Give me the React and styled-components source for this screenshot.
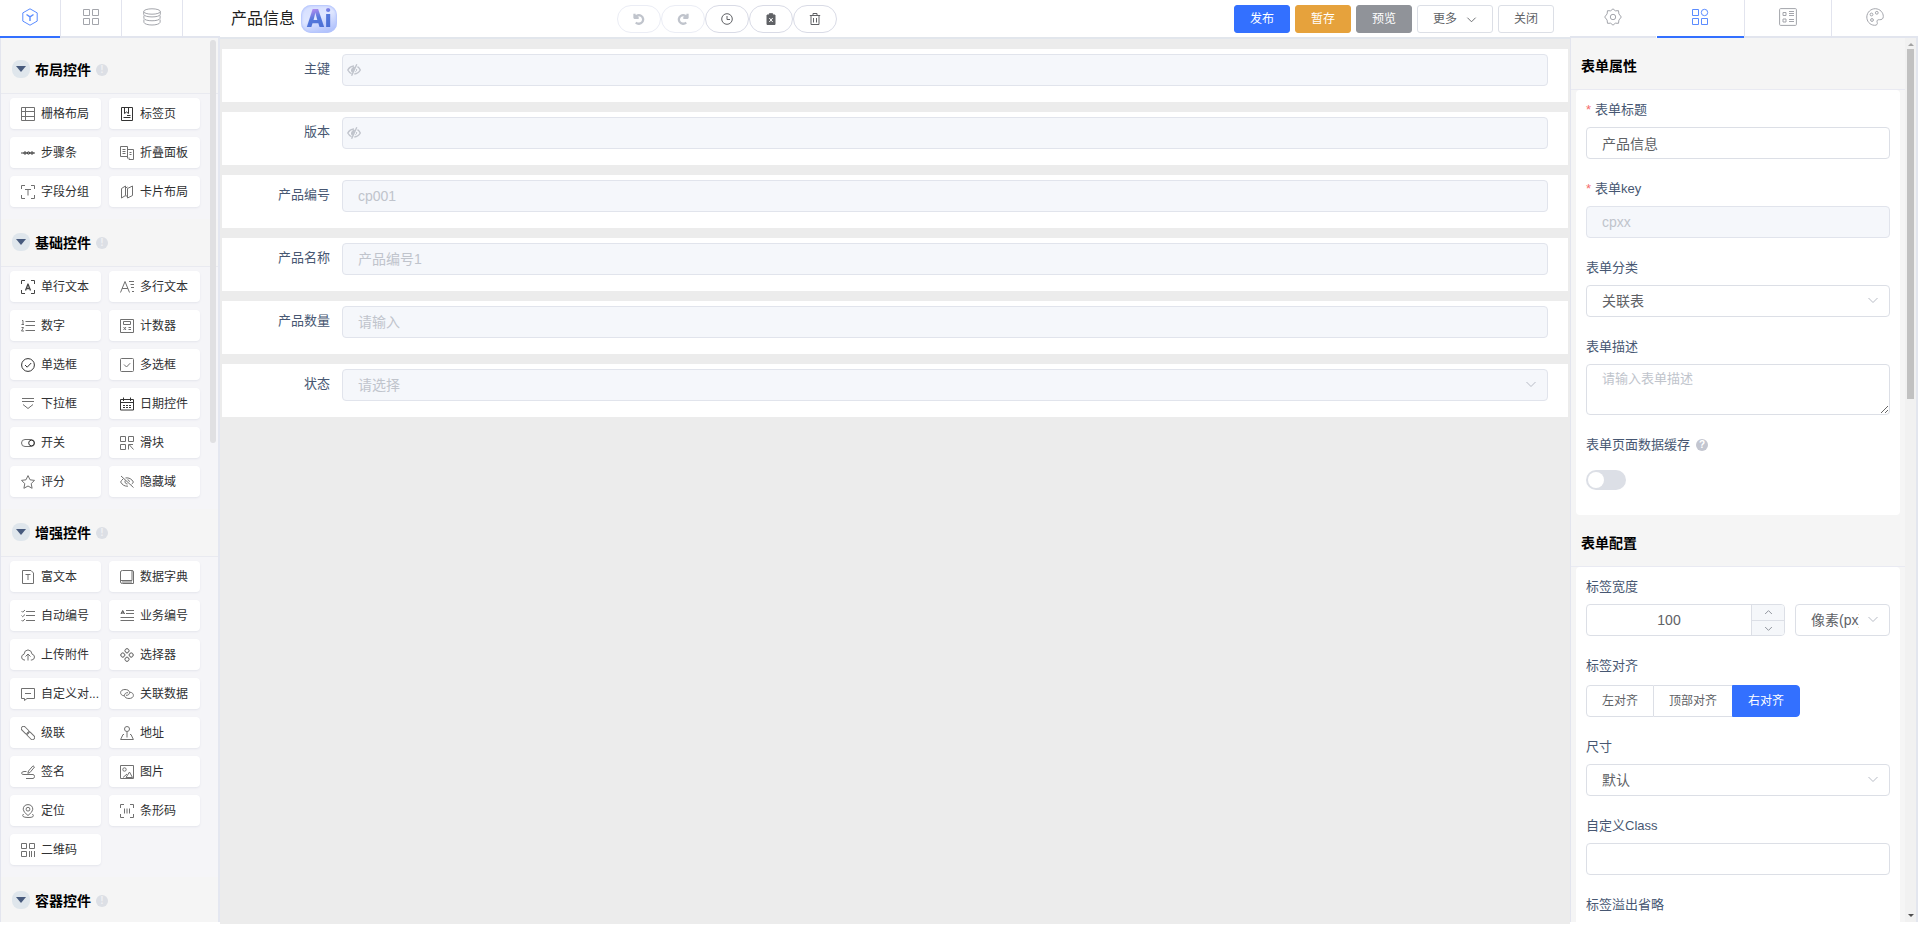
import React, { useState } from "react";
import styled, { createGlobalStyle, css } from "styled-components";

const GlobalStyle = createGlobalStyle`
  *, *::before, *::after { box-sizing: border-box; }
  body {
    margin: 0;
    background: #fff;
    font-family: "Liberation Sans", "Noto Sans CJK SC", sans-serif;
    font-size: 14px;
    line-height: 20px;
    color: #303133;
  }
  button, input, select, textarea { font: inherit; margin: 0; }
`;

/* ---------- page frame ---------- */

const Page = styled.div`
  display: grid;
  grid-template-columns: 220px minmax(0, 1fr) 349px;
  height: 100vh;
  overflow: hidden;
`;

const SidePanel = styled.aside`
  display: flex;
  flex-direction: column;
  min-height: 0;
  margin-bottom: 5px;
`;

const Center = styled.main`
  display: flex;
  flex-direction: column;
  min-width: 0;
  min-height: 0;
  margin-bottom: 3px;
  background: #ececec;
`;

const TabBar = styled.nav`
  display: flex;
  flex: none;
  height: 38px;
  background: #fff;
`;

const Tab = styled.button`
  display: flex;
  align-items: center;
  justify-content: center;
  flex: ${(p) => (p.$fixed ? "0 0 61px" : "1 1 0")};
  padding: 0 0 4px;
  border: 0;
  border-right: 1px solid ${(p) => (p.$divider ? "#e2e4ee" : "transparent")};
  box-shadow: inset 0 -2px 0 ${(p) => (p.$active ? "#3370ff" : "#e2e5ee")};
  background: #fff;
  color: ${(p) => (p.$active ? "#5b8cff" : "#a3a5ab")};
  cursor: pointer;
`;

const TabFiller = styled.div`
  flex: 1;
  box-shadow: inset 0 -2px 0 #e2e5ee;
`;

/* ---------- icons ---------- */

const Svg = styled.svg`
  display: block;
  flex: none;
  fill: none;
  stroke: currentColor;
  stroke-width: ${(p) => p.$weight || 1};
  stroke-linejoin: round;
`;

const Icon = ({ name, size = 14, box = 14, weight }) => (
  <Svg width={size} height={size} viewBox={`0 0 ${box} ${box}`} $weight={weight} aria-hidden="true">
    {paths[name]}
  </Svg>
);

const corners = <path d="M.5 4V.5H4M10 .5h3.500V4M13.500 10v3.500H10M4 13.500H.5V10" />;

const paths = {
  grid: <path d="M.5.5h13v13H.5zM4.500.5v13M.5 4.500h13M.5 9.500h13" />,
  tabs: (
    <g stroke="#333">
      <path d="M1.500.5h11v13h-11zM3.500 10.500h7M7 8.500h3.500" />
      <path d="M4.500.5v6l2-1.500 2 1.500v-6" />
    </g>
  ),
  steps: (
    <g stroke="#444">
      <path d="M0 7h14" />
      <circle cx="4" cy="7" r="1.200" />
      <circle cx="7.500" cy="7" r="1.200" />
      <circle cx="11" cy="7" r="1.200" />
    </g>
  ),
  collapse: (
    <path d="M7.500 10.500H.5V.5h7v12M2.500 3.500h3M2.500 5.500h3M2.500 7.500h3M7.500 3.500h6v10h-4.500M9.500 6.500h2M9.500 8.500h2M9 11.500v2" />
  ),
  group: (
    <>
      {corners}
      <path d="M4 4.500h6M7 4.500v6" />
    </>
  ),
  cardLayout: <path d="M1.500 3.500l4-2.500v9.500l-4 2.500zM5.500 3l2-1M7.500 3.500l5-2.500v9.500l-5 2.500zM5.500 11h2" />,
  input: (
    <g stroke="#444">
      {corners}
      <path d="M4.500 10.500L7 4l2.500 6.500M5.500 8.500h3" strokeWidth="1.300" />
    </g>
  ),
  textarea: <path d="M.5 12.500L5 1.500l4.500 11M2 8.500h6M9 1.500h5M10.500 4.500H14M11 7.500h3M12 11.500h2" />,
  number: <path d="M4.500 2.500H14M4.500 6.500H14M4.500 11.500H14M1 1.500h1V5.500M.5 5.500h2.500M.5 8.500h2l-2 3.500h2.500" />,
  counter: <path d="M.5.5h13v13H.5zM3.500 2.500h7v3h-7zM3.500 8l2.500 3M6 8l-2.500 3M8.500 8.500H11M8.500 10.500H11" />,
  radio: (
    <g stroke="#333">
      <circle cx="7" cy="7" r="6.400" />
      <path d="M4 7l2.200 2.200L10.200 5" />
    </g>
  ),
  checkbox: (
    <>
      <rect x=".5" y=".5" width="13" height="13" rx="1" />
      <path d="M4 6.500l2.500 2.500L10.200 5.200" />
    </>
  ),
  select: <path d="M1 1.500h12M1 4.500h12M2 7.500l5 4 5-4" />,
  date: (
    <g stroke="#333">
      <path d="M.5 2.500h13v10.500H.5zM.5 5.500h13M3.500.5v3.500M10.500.5v3.500" />
      <path d="M3 8.500h2M6 8.500h2M9 8.500h2M3 10.500h2M6 10.500h2M9 10.500h2" />
    </g>
  ),
  switch: (
    <>
      <rect x=".5" y="3.500" width="13" height="7" rx="3.500" />
      <circle cx="10.500" cy="7" r="2.800" stroke="#333" />
    </>
  ),
  slider: <path d="M.5.5h5v5h-5zM8.500.5h5v5h-5zM.5 8.500h5v5h-5zM8.500 13.500v-5h4.500M9.500 9l4 4.500" />,
  rate: <path d="M7 .6l2 4.200 4.500.6-3.300 3.200.9 4.700L7 11l-4.100 2.300.9-4.700L.5 5.400 5 4.800z" />,
  hidden: (
    <>
      <path d="M1 1l12.500 11.500M3 4Q1.500 5.300.6 7q2.500 4.500 7.400 4.200M5.500 2.900Q10.800 2.300 13.400 7q-.7 1.400-1.800 2.300" />
      <path d="M5.200 5.500q-1 3 2.300 3.500M7.500 4.700q1.800.3 2 2.100" />
    </>
  ),
  rich: <path d="M1.500.5h8.500l2.500 2.500v10.500h-11zM4.500 4.500h5M7 4.500v5.500" />,
  dict: (
    <>
      <path d="M2.500.5h9.500q1.500 0 1.500 1.500v11.500h-11Q.5 13.500.5 12V2Q.5.500 2.500.5zM1 10.500h11v-10" />
      <path d="M2 12h10" />
    </>
  ),
  autoNo: <path d="M5 2.500h9M5 6.500h9M5 11.500h9M.5 2l1.200 1.200L4 1M.5 6.500l1.200 1.200L4 5.500M.5 11l1.200 1.200L4 10" />,
  bizNo: (
    <>
      <path d="M6 1.500h8M6 4.500h8M.5 8.500H14M.5 11.500H14" />
      <path d="M1 5l1.700-3.500L4.500 5M1.800 4h2" stroke="#444" />
    </>
  ),
  upload: (
    <path d="M4 12H3Q.6 11.500.6 9 .7 6.700 3 6.300 3.300 2.200 7 1.900q3.600.3 4.100 4.300 2.300.5 2.400 2.800-.1 2.600-2.600 3H9.800M7 12.500V6M4.500 8.500L7 6l2.500 2.500" />
  ),
  picker: (
    <>
      <rect x="5.200" y=".9" width="3.600" height="3.600" rx="1" transform="rotate(45 7 2.700)" />
      <rect x="1" y="5.200" width="3.600" height="3.600" rx="1" transform="rotate(45 2.800 7)" />
      <rect x="9.400" y="5.200" width="3.600" height="3.600" rx="1" transform="rotate(45 11.200 7)" />
      <rect x="5.200" y="9.500" width="3.600" height="3.600" rx="1" transform="rotate(45 7 11.300)" />
    </>
  ),
  dialog: <path d="M.5 1.500h13v10H6l-2.500 2v-2h-3zM4 6.500h6" />,
  relation: (
    <path d="M4 8.800C1.500 8.500.6 7 .6 5.600.7 3.500 2.600 2.500 5 2.500S9.500 3.500 9.500 5.500 8 8.500 6 8.300M10 5.200c2.500.3 3.400 1.800 3.400 3.200-.1 2.100-2 3.100-4.400 3.100S4.500 10.500 4.500 8.500 6 5.500 8 5.700" />
  ),
  cascade: (
    <>
      <rect x="-.300" y="2" width="9" height="4.400" rx="2.200" transform="rotate(45 4.200 4.200)" />
      <rect x="5.300" y="7.600" width="9" height="4.400" rx="2.200" transform="rotate(45 9.800 9.800)" />
    </>
  ),
  address: (
    <>
      <circle cx="7" cy="3" r="2.500" />
      <path d="M7 5.500v6M4 8.500H3L.6 13.500h12.800L11 8.500h-1" />
    </>
  ),
  sign: (
    <path d="M7.500 6L12 .8l1.500 1.200L9 7.500l-2.200.8zM5.500 6.500H3Q.6 6.700.6 8.200T3 9.500h9q1.500.2 1.500 2T12 13.500H5" />
  ),
  image: (
    <>
      <path d="M.5.500h13v13H.5zM3 12.500l4-3.500M6 12.500L9.500 7l3 5.500z" />
      <circle cx="4.500" cy="4.500" r="1.700" />
    </>
  ),
  locate: (
    <>
      <path d="M7 11.500Q2.200 8 2.200 5.200 2.500.8 7 .6q4.500.2 4.800 4.600Q11.800 8 7 11.500z" />
      <circle cx="7" cy="5.200" r="1.900" />
      <path d="M2.500 10Q-.5 13.300 7 13.500T11.500 10" />
    </>
  ),
  barcode: (
    <>
      {corners}
      <path d="M4.500 4.500v5M7 4.500v5M9.500 4.500v5" />
    </>
  ),
  qrcode: <path d="M.5.5h5v5h-5zM8.500.5h5v5h-5zM.5 8.500h5v5h-5zM8.500 8v6M10.500 8v6M13.500 8v6" />,

  cube: (
    <>
      <path d="M9 .8l7.200 4.100v8.200L9 17.200l-7.200-4.100V4.900z" />
      <path d="M5.500 6.500L9 8.800l3.500-2.300M9 8.800v4.200" strokeWidth="1.400" />
    </>
  ),
  apps: <path d="M1.500 1.500h6v6h-6zM10.500 1.500h6v6h-6zM1.500 10.500h6v6h-6zM10.500 10.500h6v6h-6z" />,
  appsRound: (
    <>
      <path d="M1.500 1.500h6v6h-6zM1.500 10.500h6v6h-6zM10.500 10.500h6v6h-6z" />
      <circle cx="13.500" cy="4.500" r="3.200" />
    </>
  ),
  data: (
    <>
      <ellipse cx="9" cy="3.500" rx="8.300" ry="2.700" />
      <path d="M.7 3.500v2.800C1 9.800 17 9.800 17.300 6.300V3.500M.9 7.500v2.800c.8 3.300 15.400 3.300 16.200 0V7.500M.9 11.500v2.800c.8 3.600 15.400 3.600 16.200 0v-2.800" />
    </>
  ),
  gear: (
    <>
      <path d="M9 .8l2.300 2 3.200-.1.400 3.200L17.300 9l-2.400 3.100-.4 3.200-3.200-.1L9 17.200l-2.300-2-3.200.1-.4-3.200L.7 9l2.400-3.100.4-3.200 3.200.1z" />
      <circle cx="9" cy="9" r="2.700" />
    </>
  ),
  listDoc: (
    <>
      <rect x=".6" y=".6" width="16.800" height="16.800" rx="1" />
      <path d="M4 4.500h3v3H4zM4 11h3v3H4zM10 3.500h5M10 5.500h5M10 7.500h5M10 11.500h5M10 13.500h5" />
    </>
  ),
  palette: (
    <>
      <path d="M8.500 17.300C3.500 17 .8 13 .8 9 1 4 5 .7 9.300.7c5 .2 8 4 8 7.800 0 2.600-1.800 3.300-3.800 3.200-2-.2-3 .8-2.300 2.700.6 1.700-.4 3-2.700 2.900z" />
      <circle cx="5.500" cy="6.500" r="1.400" />
      <circle cx="10.800" cy="4.800" r="1.400" />
      <circle cx="6" cy="12" r="1.400" />
    </>
  ),

  undo: <path d="M1.500.8v4h4.200M2 4.500A4.300 4.300 0 1 1 2.800 9.500" strokeWidth="2.300" />,
  redo: <path d="M10.500.8v4H6.300M10 4.500A4.300 4.300 0 1 0 9.200 9.500" strokeWidth="2.300" />,
  clock: (
    <>
      <circle cx="6" cy="6" r="5.300" />
      <path d="M6 3v3.500h3" />
    </>
  ),
  clipboard: (
    <>
      <path d="M2 2h8v9.500H2zM4.300 2V.7h3.400V2" fill="currentColor" />
      <path d="M4.300 5l3.400 4M7.700 5L4.300 9" stroke="#fff" />
    </>
  ),
  trash: <path d="M.8 2.500h10.400M4 2.500v-2h4v2M2 3v8.500h8V3M4.500 5v4.500M7.500 5v4.500" />,
  chevron: <path d="M1.500 4l4.500 4.500L10.500 4" />,
  eyeOff: (
    <>
      <path
        d="M7 3C4 3.200 2 4.800.8 7c1 1.800 2.200 3 3.700 3.600M10.500 3.600c1.200.8 2.200 1.900 2.800 3.400-1.200 2.200-3.300 3.700-6 4M9.800 1.200L4.600 12.800"
        strokeWidth="1.400"
      />
      <path d="M7.500 4.200Q4 4.500 4.600 8.500l1 .6z" fill="currentColor" />
      <path d="M9.700 6q.3 2-1.500 3" />
    </>
  ),
};

/* ---------- left panel: widget library ---------- */

const LibraryBody = styled.div`
  position: relative;
  flex: 1;
  min-height: 0;
  overflow: hidden;
  padding-top: 8px;
  border-left: 1px solid #e3e5ee;
  border-right: 2px solid #e4e7f0;
  background: #f5f5f5;
`;

const LibraryThumb = styled.div`
  position: absolute;
  top: 2px;
  right: 2px;
  width: 6px;
  height: 403px;
  border-radius: 3px;
  background: #e0e0e2;
`;

const GroupHead = styled.div`
  display: flex;
  align-items: center;
  height: 48px;
  padding-left: 11px;
  border-bottom: 1px solid #e9eaf0;
`;

const FoldButton = styled.button`
  display: flex;
  align-items: center;
  justify-content: center;
  width: 18px;
  height: 18px;
  margin: 0 5px 2px 0;
  padding: 0;
  border: 0;
  border-radius: 8px;
  background: #dfe6ec;
  cursor: pointer;

  &::before {
    content: "";
    border: 5px solid transparent;
    border-top: 6px solid #475a7d;
    border-bottom: 0;
  }
`;

const GroupTitle = styled.h2`
  margin: 0;
  font-size: 14px;
  line-height: 20px;
  font-weight: 700;
  color: #000;
`;

const Hint = styled.span`
  display: inline-flex;
  align-items: center;
  justify-content: center;
  width: 12px;
  height: 12px;
  margin-left: ${(p) => (p.$dark ? 6 : 5)}px;
  border-radius: 50%;
  background: ${(p) => (p.$dark ? "#c3c6d0" : "#dcdfe5")};
  color: ${(p) => (p.$dark ? "#fff" : "#f0f1f4")};
  font-size: 10px;
  line-height: 12px;
  font-weight: 700;
`;

const WidgetGrid = styled.div`
  display: grid;
  grid-template-columns: 1fr 1fr;
  gap: 8px;
  padding: 4px 18px 12px 9px;
  background: #f5f5f8;
`;

const WidgetCard = styled.button`
  display: flex;
  align-items: center;
  gap: 6px;
  min-width: 0;
  height: 31px;
  padding: 0 0 0 11px;
  border: 0;
  border-radius: 4px;
  background: #fff;
  box-shadow: 0 1px 2px #e4e5ec;
  color: #707070;
  cursor: grab;
`;

const WidgetName = styled.span`
  font-size: 12px;
  line-height: 18px;
  color: #303133;
  white-space: nowrap;
`;

const library = [
  {
    title: "布局控件",
    items: [
      ["grid", "栅格布局"],
      ["tabs", "标签页"],
      ["steps", "步骤条"],
      ["collapse", "折叠面板"],
      ["group", "字段分组"],
      ["cardLayout", "卡片布局"],
    ],
  },
  {
    title: "基础控件",
    items: [
      ["input", "单行文本"],
      ["textarea", "多行文本"],
      ["number", "数字"],
      ["counter", "计数器"],
      ["radio", "单选框"],
      ["checkbox", "多选框"],
      ["select", "下拉框"],
      ["date", "日期控件"],
      ["switch", "开关"],
      ["slider", "滑块"],
      ["rate", "评分"],
      ["hidden", "隐藏域"],
    ],
  },
  {
    title: "增强控件",
    items: [
      ["rich", "富文本"],
      ["dict", "数据字典"],
      ["autoNo", "自动编号"],
      ["bizNo", "业务编号"],
      ["upload", "上传附件"],
      ["picker", "选择器"],
      ["dialog", "自定义对..."],
      ["relation", "关联数据"],
      ["cascade", "级联"],
      ["address", "地址"],
      ["sign", "签名"],
      ["image", "图片"],
      ["locate", "定位"],
      ["barcode", "条形码"],
      ["qrcode", "二维码"],
    ],
  },
  { title: "容器控件", items: [] },
];

const WidgetLibrary = () => (
  <SidePanel>
    <TabBar>
      <Tab $fixed $active $divider aria-label="控件">
        <Icon name="cube" size={18} box={18} />
      </Tab>
      <Tab $fixed $divider aria-label="模板">
        <Icon name="apps" size={18} box={18} />
      </Tab>
      <Tab $fixed $divider aria-label="数据">
        <Icon name="data" size={18} box={18} />
      </Tab>
      <TabFiller />
    </TabBar>
    <LibraryBody>
      {library.map((group) => (
        <section key={group.title}>
          <GroupHead>
            <FoldButton aria-label={group.title} />
            <GroupTitle>{group.title}</GroupTitle>
            <Hint>!</Hint>
          </GroupHead>
          <WidgetGrid>
            {group.items.map(([icon, name]) => (
              <WidgetCard key={name}>
                <Icon name={icon} />
                <WidgetName>{name}</WidgetName>
              </WidgetCard>
            ))}
          </WidgetGrid>
        </section>
      ))}
      <LibraryThumb />
    </LibraryBody>
  </SidePanel>
);

/* ---------- centre: toolbar and form canvas ---------- */

const Toolbar = styled.header`
  display: grid;
  grid-template-columns: 7fr 17fr;
  flex: none;
  padding: 5px 16px 4px 11px;
  border-bottom: 2px solid #e2e6ec;
  background: #fff;
`;

const TitleBox = styled.div`
  display: flex;
  align-items: center;
  gap: 6px;
`;

const FormTitle = styled.h1`
  margin: 0;
  font-size: 16px;
  line-height: 24px;
  font-weight: 400;
  color: #1f1f1f;
`;

const AiBadge = styled.button`
  width: 36px;
  height: 28px;
  padding: 0;
  border: 0;
  border-radius: 10px;
  background: linear-gradient(160deg, #d3ddff, #dfe6ff 45%, #a4b8fb);
  box-shadow: inset 0 0 2px 1px #b4c4fd;
  cursor: pointer;
`;

const AiText = styled.span`
  display: block;
  font-family: Inter, "Liberation Sans", sans-serif;
  font-size: 24px;
  line-height: 28px;
  font-weight: 800;
  background: linear-gradient(160deg, #b48cf0 20%, #5478dc 45%, #4468cf);
  background-clip: text;
  color: transparent;
`;

const ToolbarMain = styled.div`
  display: flex;
  align-items: center;
  justify-content: space-between;
`;

const ButtonRow = styled.div`
  display: flex;
  gap: ${(p) => p.$gap || 0}px;
`;

const PillButton = styled.button`
  display: flex;
  align-items: center;
  justify-content: center;
  width: 44px;
  height: 28px;
  padding: 0 0 1px;
  border: 1px solid #d9dbe6;
  border-radius: 14px;
  background: #fff;
  color: #606266;
  cursor: pointer;

  &:disabled {
    border-color: #ebedf5;
    color: #c0c4cc;
  }
`;

const tones = {
  primary: css`
    border-color: #3370ff;
    background: #3370ff;
    color: #fff;
  `,
  warning: css`
    border-color: #e6a23c;
    background: #e6a23c;
    color: #fff;
  `,
  info: css`
    border-color: #909399;
    background: #909399;
    color: #fff;
  `,
};

const ActionButton = styled.button`
  display: flex;
  align-items: center;
  gap: 9px;
  height: 28px;
  padding: 0 15px;
  border: 1px solid #dcdfe6;
  border-radius: 3px;
  background: #fff;
  color: #606266;
  font-size: 12px;
  line-height: 18px;
  white-space: nowrap;
  cursor: pointer;
  ${(p) => tones[p.$tone]}
`;

const Canvas = styled.form`
  display: flex;
  flex-direction: column;
  gap: 10px;
  padding: 10px 2px;
`;

const FieldRow = styled.div`
  display: grid;
  grid-template-columns: 120px minmax(0, 1fr);
  padding: 5px 20px 16px 0;
  background: #fff;
`;

const FieldLabel = styled.label`
  padding-right: 12px;
  font-size: 13px;
  line-height: 30px;
  color: #475772;
  text-align: right;
`;

const ControlWrap = styled.div`
  position: relative;
  min-width: 0;
`;

const controlStyle = css`
  display: block;
  width: 100%;
  height: 32px;
  padding: 0 15px;
  border: 1px solid #dcdfe6;
  border-radius: 4px;
  outline: 0;
  background: #fff;
  color: #606266;
  font-size: 14px;
  line-height: 20px;

  &::placeholder {
    color: #c0c4cc;
    opacity: 1;
  }
  &:disabled {
    border-color: #e1e4ec;
    background: #f5f7fb;
    color: #c0c4cc;
    opacity: 1;
  }
`;

const TextInput = styled.input`
  ${controlStyle}
`;

const SelectInput = styled.select`
  ${controlStyle}
  padding-right: 30px;
  appearance: none;
`;

const SelectArrow = styled.span`
  position: absolute;
  top: 9px;
  right: 11px;
  color: #b8bcc6;
  pointer-events: none;
`;

const PrefixIcon = styled.span`
  position: absolute;
  top: 9px;
  left: 5px;
  color: #c0c4cc;
`;

const Select = ({ id, options, ...rest }) => (
  <ControlWrap>
    <SelectInput id={id} {...rest}>
      {options.map((o) => (
        <option key={o}>{o}</option>
      ))}
    </SelectInput>
    <SelectArrow>
      <Icon name="chevron" size={12} box={12} />
    </SelectArrow>
  </ControlWrap>
);

const canvasFields = [
  { id: "pk", label: "主键", hidden: true },
  { id: "version", label: "版本", hidden: true },
  { id: "code", label: "产品编号", hint: "cp001" },
  { id: "name", label: "产品名称", hint: "产品编号1" },
  { id: "count", label: "产品数量", hint: "请输入" },
  { id: "state", label: "状态", hint: "请选择", select: true },
];

const Designer = () => (
  <Center>
    <Toolbar>
      <TitleBox>
        <FormTitle>产品信息</FormTitle>
        <AiBadge>
          <AiText>Ai</AiText>
        </AiBadge>
      </TitleBox>
      <ToolbarMain>
        <ButtonRow>
          <PillButton disabled aria-label="撤销">
            <Icon name="undo" size={12} box={12} />
          </PillButton>
          <PillButton disabled aria-label="重做">
            <Icon name="redo" size={12} box={12} />
          </PillButton>
          <PillButton aria-label="历史">
            <Icon name="clock" size={12} box={12} />
          </PillButton>
          <PillButton aria-label="清空剪贴板">
            <Icon name="clipboard" size={12} box={12} />
          </PillButton>
          <PillButton aria-label="删除">
            <Icon name="trash" size={12} box={12} />
          </PillButton>
        </ButtonRow>
        <ButtonRow $gap={5}>
          <ActionButton $tone="primary">发布</ActionButton>
          <ActionButton $tone="warning">暂存</ActionButton>
          <ActionButton $tone="info">预览</ActionButton>
          <ActionButton>
            更多
            <Icon name="chevron" size={11} box={12} />
          </ActionButton>
          <ActionButton>关闭</ActionButton>
        </ButtonRow>
      </ToolbarMain>
    </Toolbar>
    <Canvas>
      {canvasFields.map((f) => (
        <FieldRow key={f.id}>
          <FieldLabel htmlFor={f.id}>{f.label}</FieldLabel>
          {f.select ? (
            <Select id={f.id} options={[f.hint]} disabled />
          ) : (
            <ControlWrap>
              <TextInput id={f.id} placeholder={f.hint} disabled />
              {f.hidden && (
                <PrefixIcon>
                  <Icon name="eyeOff" />
                </PrefixIcon>
              )}
            </ControlWrap>
          )}
        </FieldRow>
      ))}
    </Canvas>
  </Center>
);

/* ---------- right panel: form properties ---------- */

const PropsBody = styled.div`
  display: flex;
  flex: 1;
  min-height: 0;
  margin-right: 1px;
  border-left: 1px solid #e3e5ee;
  border-right: 2px solid #e3e6ee;
  background: #f5f5f5;
`;

const PropsScroll = styled.div`
  flex: 1;
  min-width: 0;
  overflow: hidden;
`;

const Track = styled.div`
  display: flex;
  flex-direction: column;
  align-items: center;
  flex: none;
  width: 11px;
  padding: 5px 0;
  background: #f1f1f1;
`;

const TrackArrow = styled.span`
  flex: none;
  margin: ${(p) => (p.$down ? "auto 0 0" : "0 0 3px")};
  border: 3px solid transparent;
  ${(p) =>
    p.$down
      ? "border-top-color: #505050; border-bottom: 0;"
      : "border-bottom-color: #a3a3a3; border-top: 0;"}
`;

const TrackThumb = styled.div`
  flex: none;
  width: 7px;
  height: 40%;
  background: #c1c1c1;
`;

const PropsHead = styled.div`
  display: flex;
  align-items: center;
  height: 52px;
  padding: 4px 0 0 10px;
  border-bottom: 1px solid #e9eaf2;
`;

const PropsCard = styled.div`
  margin: 0 5px;
  padding: 4px 10px 3px;
  border-radius: 4px;
  background: #fff;
`;

const PropItem = styled.div`
  margin-bottom: 14px;
`;

const PropLabel = styled.label`
  display: flex;
  align-items: center;
  height: 33px;
  padding-bottom: 2px;
  font-size: 13px;
  line-height: 20px;
  color: #475772;
`;

const Star = styled.span`
  margin-right: 4px;
  color: #f56c6c;
`;

const TextArea = styled.textarea`
  ${controlStyle}
  height: 51px;
  padding: 4px 15px;
  font-size: 13px;
  resize: vertical;
`;

const SwitchBox = styled.div`
  display: flex;
  align-items: center;
  height: 36px;
`;

const SwitchInput = styled.input`
  position: relative;
  width: 40px;
  height: 20px;
  border-radius: 10px;
  background: #dcdfe6;
  appearance: none;
  cursor: pointer;

  &::before {
    content: "";
    position: absolute;
    top: 2px;
    left: 2px;
    width: 16px;
    height: 16px;
    border-radius: 50%;
    background: #fff;
  }
  &:checked {
    background: #3370ff;
  }
  &:checked::before {
    left: 22px;
  }
`;

const SizeRow = styled.div`
  display: grid;
  grid-template-columns: minmax(0, 1fr) 95px;
  gap: 10px;
`;

const Stepper = styled.div`
  display: grid;
  grid-template-columns: minmax(0, 1fr) 33px;
  height: 32px;
  overflow: hidden;
  border: 1px solid #dcdfe6;
  border-radius: 4px;
  background: #fff;
`;

const StepperInput = styled.input`
  min-width: 0;
  padding: 0 15px;
  border: 0;
  outline: 0;
  background: transparent;
  color: #606266;
  text-align: center;
`;

const StepperButtons = styled.div`
  display: grid;
  grid-template-rows: 1fr 1fr;
  border-left: 1px solid #dcdfe6;
`;

const StepButton = styled.button`
  display: flex;
  align-items: center;
  justify-content: center;
  padding: 0;
  border: 0;
  background: #f5f7fa;
  color: #8f939b;
  cursor: pointer;

  & + & {
    border-top: 1px solid #dcdfe6;
  }
  &:first-child svg {
    transform: rotate(180deg);
  }
`;

const Segments = styled.div`
  display: flex;
  padding-top: 2px;
`;

const Segment = styled.label`
  position: relative;
  height: 32px;
  padding: 0 15px;
  border: 1px solid ${(p) => (p.$on ? "#3370ff" : "#dcdfe6")};
  border-right-width: ${(p) => (p.$beforeOn ? 0 : 1)}px;
  border-left-width: ${(p) => (p.$on || p.$first ? 1 : 0)}px;
  border-radius: ${(p) => (p.$first ? "4px 0 0 4px" : p.$last ? "0 4px 4px 0" : "0")};
  background: ${(p) => (p.$on ? "#3370ff" : "#fff")};
  color: ${(p) => (p.$on ? "#fff" : "#606266")};
  font-size: 12px;
  line-height: 30px;
  cursor: pointer;
`;

const SegmentRadio = styled.input`
  position: absolute;
  inset: 0;
  opacity: 0;
  cursor: pointer;
`;

const aligns = ["左对齐", "顶部对齐", "右对齐"];

const AlignPicker = () => {
  const [value, setValue] = useState(2);
  return (
    <Segments role="radiogroup" aria-label="标签对齐">
      {aligns.map((name, i) => (
        <Segment
          key={name}
          $on={i === value}
          $beforeOn={i + 1 === value}
          $first={i === 0}
          $last={i === aligns.length - 1}
        >
          <SegmentRadio type="radio" name="align" checked={i === value} onChange={() => setValue(i)} />
          {name}
        </Segment>
      ))}
    </Segments>
  );
};

const Prop = ({ label, id, required, help, children }) => (
  <PropItem>
    <PropLabel as={id ? "label" : "div"} htmlFor={id}>
      {required && <Star>*</Star>}
      {label}
      {help && <Hint $dark>?</Hint>}
    </PropLabel>
    {children}
  </PropItem>
);

const FormProps = () => (
  <SidePanel>
    <TabBar>
      <Tab aria-label="设置">
        <Icon name="gear" size={18} box={18} />
      </Tab>
      <Tab $active $divider aria-label="表单属性">
        <Icon name="appsRound" size={18} box={18} />
      </Tab>
      <Tab $divider aria-label="列表">
        <Icon name="listDoc" size={18} box={18} />
      </Tab>
      <Tab aria-label="主题">
        <Icon name="palette" size={18} box={18} />
      </Tab>
    </TabBar>
    <PropsBody>
      <PropsScroll>
        <PropsHead>
          <GroupTitle>表单属性</GroupTitle>
        </PropsHead>
        <PropsCard>
          <Prop id="f-title" label="表单标题" required>
            <TextInput id="f-title" defaultValue="产品信息" />
          </Prop>
          <Prop id="f-key" label="表单key" required>
            <TextInput id="f-key" defaultValue="cpxx" disabled />
          </Prop>
          <Prop id="f-type" label="表单分类">
            <Select id="f-type" options={["关联表"]} />
          </Prop>
          <Prop id="f-desc" label="表单描述">
            <TextArea id="f-desc" placeholder="请输入表单描述" />
          </Prop>
          <Prop id="f-cache" label="表单页面数据缓存" help>
            <SwitchBox>
              <SwitchInput id="f-cache" type="checkbox" role="switch" />
            </SwitchBox>
          </Prop>
        </PropsCard>
        <PropsHead>
          <GroupTitle>表单配置</GroupTitle>
        </PropsHead>
        <PropsCard>
          <Prop id="f-width" label="标签宽度">
            <SizeRow>
              <Stepper>
                <StepperInput id="f-width" defaultValue="100" />
                <StepperButtons>
                  <StepButton aria-label="增加">
                    <Icon name="chevron" size={9} box={12} weight={1.3} />
                  </StepButton>
                  <StepButton aria-label="减少">
                    <Icon name="chevron" size={9} box={12} weight={1.3} />
                  </StepButton>
                </StepperButtons>
              </Stepper>
              <Select aria-label="单位" options={["像素(px)"]} />
            </SizeRow>
          </Prop>
          <Prop label="标签对齐">
            <AlignPicker />
          </Prop>
          <Prop id="f-size" label="尺寸">
            <Select id="f-size" options={["默认"]} />
          </Prop>
          <Prop id="f-class" label="自定义Class">
            <TextInput id="f-class" />
          </Prop>
          <Prop id="f-ellipsis" label="标签溢出省略">
            <SwitchBox>
              <SwitchInput id="f-ellipsis" type="checkbox" role="switch" />
            </SwitchBox>
          </Prop>
        </PropsCard>
      </PropsScroll>
      <Track>
        <TrackArrow />
        <TrackThumb />
        <TrackArrow $down />
      </Track>
    </PropsBody>
  </SidePanel>
);

export default function App() {
  return (
    <>
      <GlobalStyle />
      <Page>
        <WidgetLibrary />
        <Designer />
        <FormProps />
      </Page>
    </>
  );
}
